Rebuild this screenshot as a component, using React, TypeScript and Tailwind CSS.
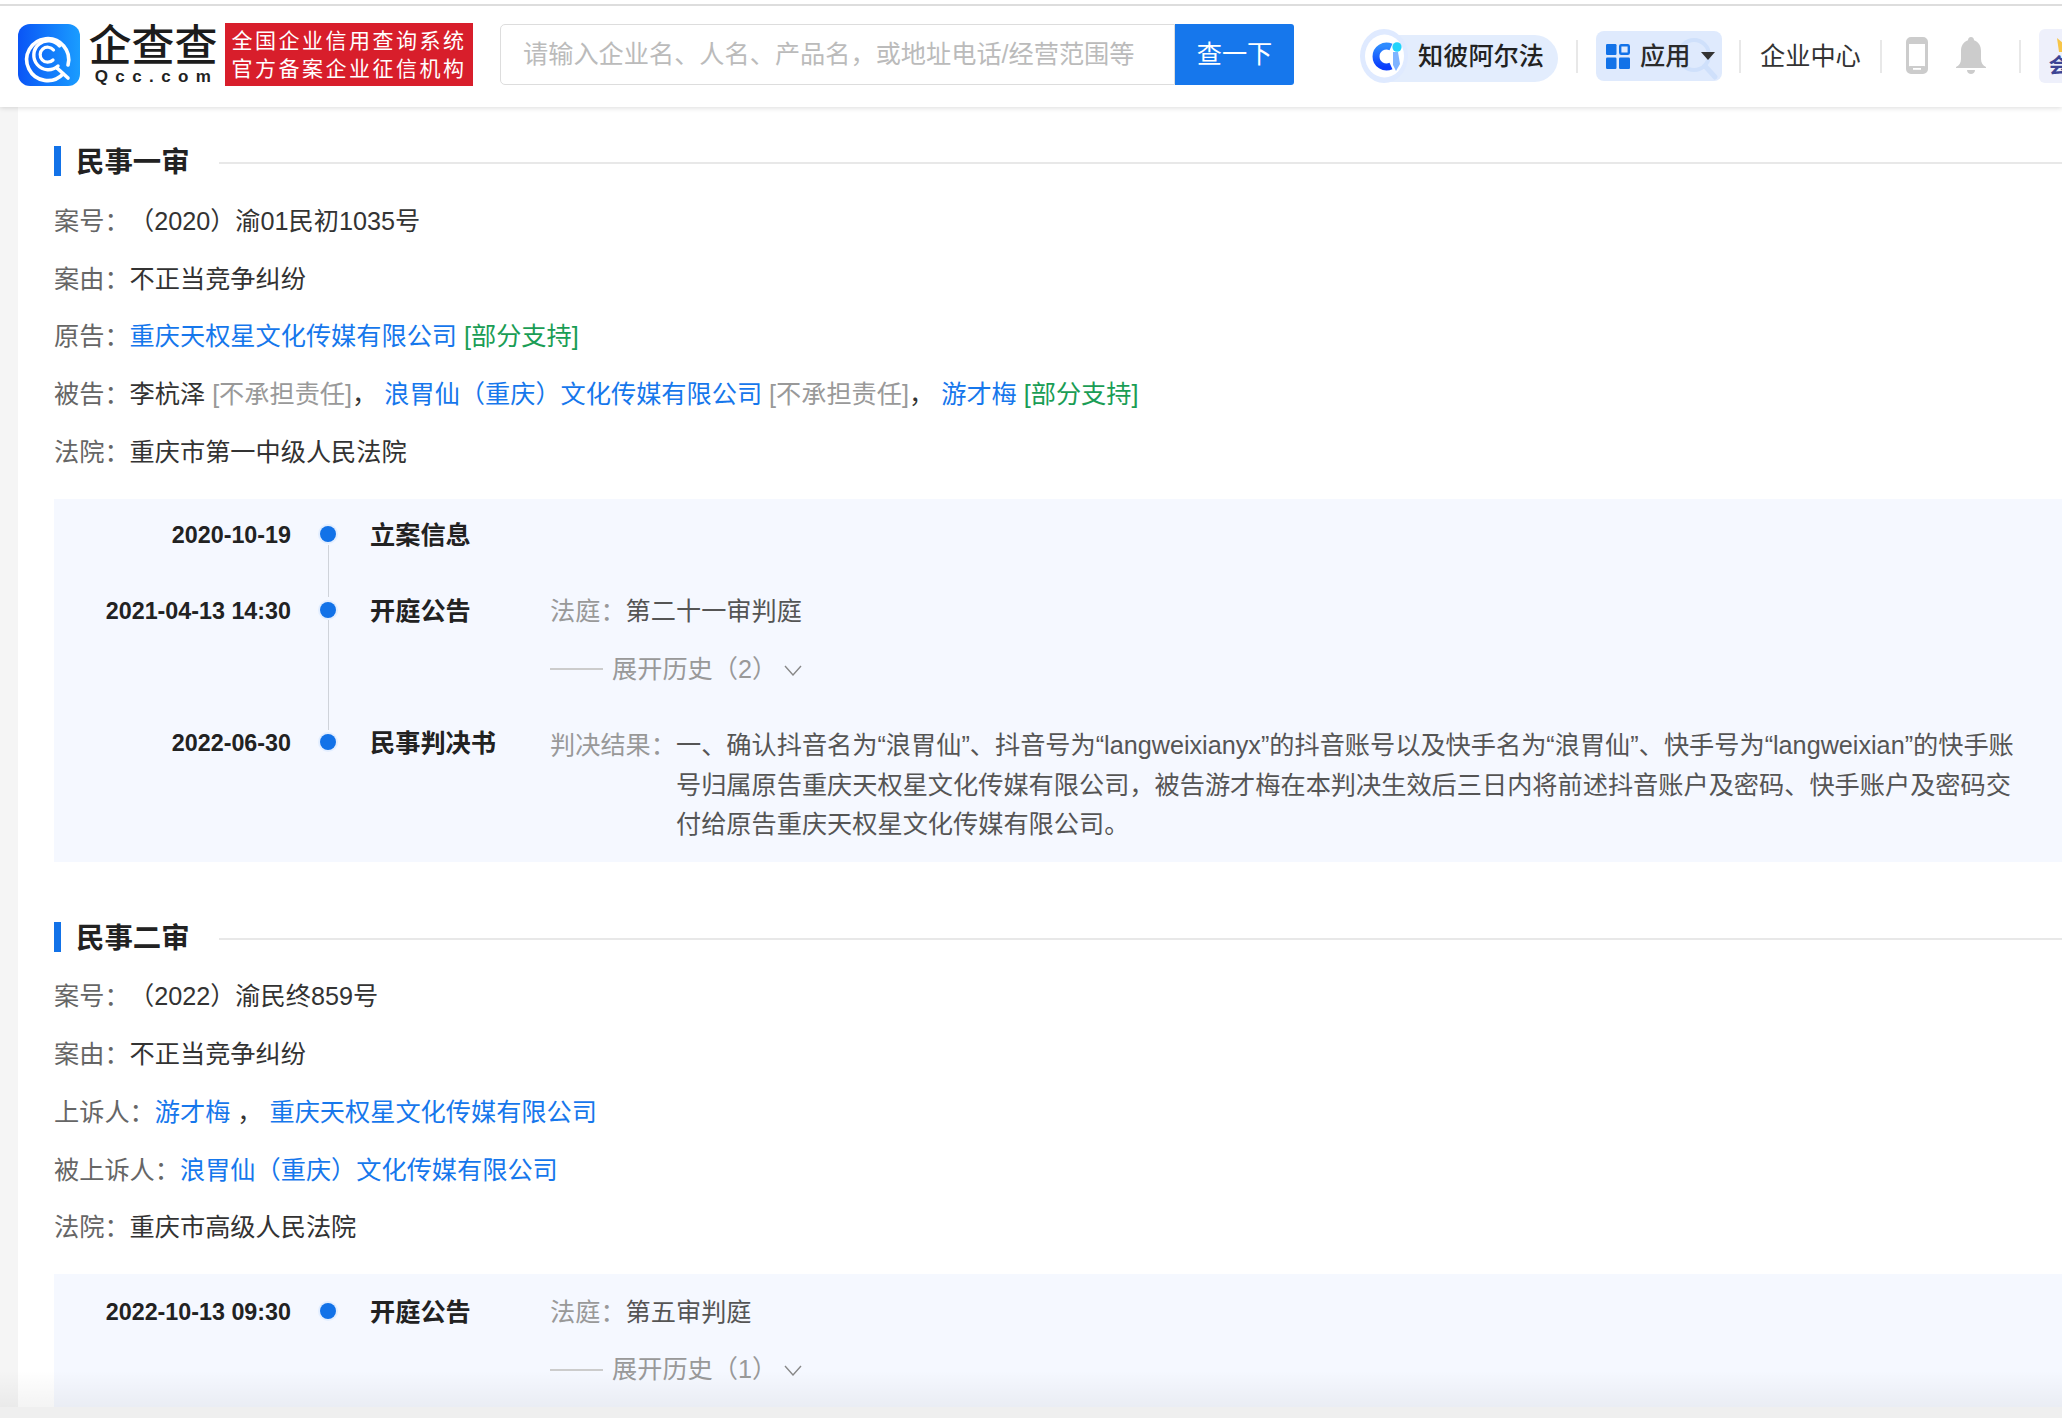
import type { ReactNode } from "react";

const FONT = { fontFamily: '"Liberation Sans", "Noto Sans CJK SC", sans-serif' };

function Link({ children }: { children: ReactNode }) {
  return <span className="text-[#1677ec]">{children}</span>;
}

function Grey({ children }: { children: ReactNode }) {
  return <span className="text-[#999999]">{children}</span>;
}

function Green({ children }: { children: ReactNode }) {
  return <span className="text-[#1a9d55]">{children}</span>;
}

function Divider({ className }: { className: string }) {
  return <div className={`h-[33px] w-[2px] shrink-0 bg-[#e8e8e8] ${className}`} />;
}

function QccLogo() {
  return (
    <svg width="62" height="62" viewBox="0 0 62 62" className="shrink-0">
      <defs>
        <linearGradient id="qcc" x1="0" y1="0" x2="1" y2="0">
          <stop offset="0" stopColor="#0a55f6" />
          <stop offset="1" stopColor="#1a9dff" />
        </linearGradient>
      </defs>
      <rect width="62" height="62" rx="12" fill="url(#qcc)" />
      <path d="M45 50 A21 21 0 1 1 50 41" fill="none" stroke="#fff" strokeWidth="3.6" strokeLinecap="round" />
      <path d="M40 42 A14.5 14.5 0 1 1 41.5 22" fill="none" stroke="#fff" strokeWidth="3.4" strokeLinecap="round" />
      <path d="M35 36 A7.5 7.5 0 1 1 35.5 26" fill="none" stroke="#fff" strokeWidth="3.2" strokeLinecap="round" />
      <path d="M39 44 L50 54" fill="none" stroke="#fff" strokeWidth="3.6" strokeLinecap="round" />
    </svg>
  );
}

function AlphaLogo() {
  return (
    <svg width="48" height="54" viewBox="0 0 48 54" className="relative z-10 shrink-0">
      <defs>
        <linearGradient id="alpha" x1="0" y1="0" x2="0" y2="1">
          <stop offset="0" stopColor="#2f8cff" />
          <stop offset="1" stopColor="#0a3dfc" />
        </linearGradient>
      </defs>
      <ellipse cx="24" cy="27" rx="24" ry="27" fill="#dfeaff" />
      <ellipse cx="24.5" cy="27" rx="19.5" ry="21.5" fill="#fff" />
      <path d="M31 18 A10.5 10.5 0 1 0 31 37" fill="none" stroke="url(#alpha)" strokeWidth="7" />
      <path d="M33 23 H38 L40 35 L36 42 L33 36 Z" fill="#7fb4ff" />
      <ellipse cx="37" cy="18" rx="4.6" ry="4.8" fill="#22d3fb" />
    </svg>
  );
}

function AppsIcon() {
  return (
    <svg width="24" height="25" viewBox="0 0 24 25" className="shrink-0">
      <rect width="10.5" height="11" rx="1.2" fill="#1272e8" />
      <rect x="14.2" y="1.2" width="8.6" height="8.6" rx="1" fill="none" stroke="#1272e8" strokeWidth="2.4" />
      <rect y="13.5" width="10.5" height="11.5" rx="1.2" fill="#1272e8" />
      <rect x="13" y="13.5" width="11" height="11.5" rx="1.2" fill="#1272e8" />
    </svg>
  );
}

function PhoneIcon() {
  return (
    <svg width="22" height="37" viewBox="0 0 22 37" className="shrink-0">
      <rect x="1.5" y="1.5" width="19" height="34" rx="3.5" fill="#fff" stroke="#cccccc" strokeWidth="3" />
      <rect x="2" y="2" width="18" height="5" fill="#cccccc" />
      <rect x="2" y="29" width="18" height="6" rx="2" fill="#cccccc" />
      <rect x="7" y="31" width="8" height="1.8" fill="#fff" />
    </svg>
  );
}

function BellIcon() {
  return (
    <svg width="30" height="37" viewBox="0 0 30 37" className="shrink-0">
      <path
        d="M15 0 C17 0 18 1.4 18 3.2 C23 5 25 9 25 14 V22 C25 26 27 28.5 30 30 V31 H0 V30 C3 28.5 5 26 5 22 V14 C5 9 7 5 12 3.2 C12 1.4 13 0 15 0 Z"
        fill="#cccccc"
      />
      <path d="M11 33 H19 C19 35.5 17 37 15 37 C13 37 11 35.5 11 33 Z" fill="#cccccc" />
    </svg>
  );
}

function Header() {
  return (
    <header className="relative z-10 shrink-0 bg-white shadow-[0_1px_5px_rgba(0,0,0,0.14)]">
      <div className="h-[4px] bg-white" />
      <div className="h-[2px] bg-[#dddddd]" />
      <div className="flex h-[101px] items-center pb-[4px] pl-[18px]">
        <QccLogo />
        <div className="ml-[8px] flex w-[130px] shrink-0 flex-col items-center">
          <div className="text-[43px] leading-[45px] font-medium whitespace-nowrap text-[#1c1c1c]">企查查</div>
          <div className="-mr-[7px] text-[17px] leading-[16px] font-bold tracking-[7.4px] whitespace-nowrap text-[#222222]">Qcc.com</div>
        </div>
        <div className="ml-[7px] flex h-[63px] w-[248px] shrink-0 flex-col items-center justify-center bg-[#d81e2b] text-[21px] leading-[27.5px] tracking-[2.5px] whitespace-nowrap text-white">
          <div>全国企业信用查询系统</div>
          <div>官方备案企业征信机构</div>
        </div>
        <div className="ml-[27px] flex h-[61px] w-[675px] shrink-0 items-center rounded-l-[5px] border border-[#dddddd] pl-[22px] text-[25.2px] whitespace-nowrap text-[#bbbbbb]">
          请输入企业名、人名、产品名，或地址电话/经营范围等
        </div>
        <div className="flex h-[61px] w-[119px] shrink-0 items-center justify-center rounded-r-[3px] bg-[#1677ec] text-[25.2px] text-white">
          查一下
        </div>
        <div className="flex items-center pt-[3px]">
          <div className="relative ml-[66px] flex w-[198px] shrink-0 items-center">
            <AlphaLogo />
            <div className="absolute top-[6px] left-[30px] h-[47px] w-[168px] rounded-r-[24px] bg-[#e3edfd]" />
            <span className="relative z-10 mt-[2px] ml-[10px] text-[25.2px] leading-none font-medium whitespace-nowrap text-[#222222]">知彼阿尔法</span>
          </div>
          <Divider className="ml-[18px]" />
          <div className="relative ml-[18px] flex h-[50px] w-[126px] shrink-0 items-center overflow-hidden rounded-[8px] bg-[#dfeafd] pl-[10px]">
            <svg width="50" height="50" viewBox="0 0 50 50" className="absolute top-[6px] left-[78px]">
              <circle cx="20" cy="18" r="15" fill="none" stroke="#cfe0fb" strokeWidth="4" />
              <path d="M31 29 L41 40" stroke="#cfe0fb" strokeWidth="5" strokeLinecap="round" />
            </svg>
            <AppsIcon />
            <span className="relative mt-[2px] ml-[10px] text-[25.2px] leading-none font-medium whitespace-nowrap text-[#2b2b2b]">应用</span>
            <span className="relative ml-[11px] h-0 w-0 border-x-[7px] border-t-[8px] border-x-transparent border-t-[#333333]" />
          </div>
          <Divider className="ml-[17px]" />
          <span className="mt-[2px] ml-[19px] shrink-0 text-[25.2px] whitespace-nowrap text-[#333333]">企业中心</span>
          <Divider className="ml-[19px]" />
          <div className="-mt-[2px] ml-[24px] flex items-center gap-[28px]">
            <PhoneIcon />
            <BellIcon />
          </div>
          <Divider className="ml-[33px]" />
          <div className="ml-[18px] flex h-[54px] w-[60px] shrink-0 flex-col items-center rounded-[6px] bg-[#eef0fb] pt-[7px]">
            <svg width="26" height="16" viewBox="0 0 26 16">
              <path d="M1 2 L7 7 L13 0 L19 7 L25 2 L23 16 H3 Z" fill="#f7c548" />
            </svg>
            <span className="text-[20px] leading-[28px] font-bold text-[#3d4494]">会员</span>
          </div>
        </div>
      </div>
    </header>
  );
}

function SectionTitle({ children, className }: { children: ReactNode; className: string }) {
  return (
    <div className={`flex h-[30px] items-center ${className}`}>
      <div className="h-full w-[7px] shrink-0 bg-[#1272e8]" />
      <h2 className="ml-[15px] shrink-0 pt-[2px] text-[28.4px] leading-none font-bold text-[#222222]">{children}</h2>
      <div className="mt-[3px] ml-[29px] h-[2px] flex-1 bg-[#e8e8e8]" />
    </div>
  );
}

function InfoRow({ label, children }: { label: string; children: ReactNode }) {
  return (
    <div className="h-[57.7px] text-[25.2px] leading-[57.7px] whitespace-pre text-[#333333]">
      <span className="text-[#666666]">{label}</span>
      {children}
    </div>
  );
}

type Step = {
  date: string;
  title: string;
  line?: string;
  body?: ReactNode;
  rowClass: string;
};

function Timeline({ steps, className }: { steps: Step[]; className: string }) {
  return (
    <div className={`bg-[#f5f8ff] ${className}`}>
      {steps.map((s) => (
        <div key={s.date} className={`relative flex ${s.rowClass}`}>
          <div className="w-[237px] shrink-0 text-right text-[23.3px] leading-[40px] font-bold text-[#222222]">{s.date}</div>
          <div className="w-[79px] shrink-0 pt-[11px] pl-[29px]">
            <div className="h-[16px] w-[16px] rounded-full bg-[#1272e8] shadow-[0_0_0_2px_#e3eeff]" />
          </div>
          {s.line && <div className={`absolute left-[274px] w-px bg-[#cfd3da] ${s.line}`} />}
          <div className="w-[180px] shrink-0 text-[25.2px] leading-[40px] font-bold text-[#222222]">{s.title}</div>
          <div className="min-w-0 flex-1 pr-[46px] text-[25.2px] leading-[39.5px] text-[#555555]">{s.body}</div>
        </div>
      ))}
    </div>
  );
}

function Expand({ count }: { count: number }) {
  return (
    <div className="mt-[18px] flex h-[40px] items-center text-[#999999]">
      <div className="h-[2px] w-[53px] bg-[#cccccc]" />
      <span className="ml-[9px]">展开历史（{count}）</span>
      <svg width="18" height="11" viewBox="0 0 18 11" className="mt-[2px] ml-[7px]">
        <path d="M1 1 L9 10 L17 1" fill="none" stroke="#888888" strokeWidth="1.4" />
      </svg>
    </div>
  );
}

function Court({ room }: { room: string }) {
  return (
    <div className="h-[40px] leading-[40px]">
      <Grey>法庭：</Grey>
      {room}
    </div>
  );
}

// faint diagonal stamp across the whole page, only the ones fully inside the window
function Watermark() {
  const marks: { x: number; y: number }[] = [];
  for (let i = -8; i < 16; i++) {
    for (let j = 0; j < 24; j++) {
      const x = i * 170 + j * 106;
      const y = 60 - i * 170 + j * 106;
      if (x > 0 && x < 1880 && y > 190 && y < 1400) marks.push({ x, y });
    }
  }
  return (
    <div className="pointer-events-none absolute inset-0 z-20 overflow-hidden">
      {marks.map((m) => (
        <span
          key={`${m.x}-${m.y}`}
          className="absolute origin-top-left rotate-[-45deg] text-[30px] font-bold tracking-[14px] whitespace-nowrap text-[rgba(0,0,0,0.014)]"
          style={{ left: m.x, top: m.y }}
        >
          88MP9G
        </span>
      ))}
    </div>
  );
}

export default function App() {
  const firstSteps: Step[] = [
    { date: "2020-10-19", title: "立案信息", line: "top-[30px] h-[52px]", rowClass: "h-[76px]" },
    {
      date: "2021-04-13 14:30",
      title: "开庭公告",
      line: "top-[29px] h-[110px]",
      rowClass: "h-[132px]",
      body: (
        <>
          <Court room="第二十一审判庭" />
          <Expand count={2} />
        </>
      ),
    },
    {
      date: "2022-06-30",
      title: "民事判决书",
      rowClass: "h-[139px]",
      body: (
        <div className="flex pt-[3px]">
          <span className="shrink-0 text-[#999999]">判决结果：</span>
          <p>
            一、确认抖音名为“浪胃仙”、抖音号为“langweixianyx”的抖音账号以及快手名为“浪胃仙”、快手号为“langweixian”的快手账号归属原告重庆天权星文化传媒有限公司，被告游才梅在本判决生效后三日内将前述抖音账户及密码、快手账户及密码交付给原告重庆天权星文化传媒有限公司。
          </p>
        </div>
      ),
    },
  ];

  const secondSteps: Step[] = [
    {
      date: "2022-10-13 09:30",
      title: "开庭公告",
      rowClass: "h-[115px]",
      body: (
        <>
          <Court room="第五审判庭" />
          <Expand count={1} />
        </>
      ),
    },
  ];

  return (
    <div className="relative flex h-[1418px] w-[2062px] flex-col overflow-hidden bg-[#f5f5f5]" style={FONT}>
      <Header />
      <main className="ml-[18px] flex-1 bg-white pl-[36px]">
        <SectionTitle className="mt-[39px]">民事一审</SectionTitle>
        <div className="mt-[17px]">
          <InfoRow label="案号：">
            <span className="ml-[12px]">（2020）渝01民初1035号</span>
          </InfoRow>
          <InfoRow label="案由：">不正当竞争纠纷</InfoRow>
          <InfoRow label="原告：">
            <Link>重庆天权星文化传媒有限公司</Link> <Green>[部分支持]</Green>
          </InfoRow>
          <InfoRow label="被告：">
            李杭泽 <Grey>[不承担责任]</Grey>， <Link>浪胃仙（重庆）文化传媒有限公司</Link> <Grey>[不承担责任]</Grey>，{" "}
            <Link>游才梅</Link> <Green>[部分支持]</Green>
          </InfoRow>
          <InfoRow label="法院：">重庆市第一中级人民法院</InfoRow>
        </div>
        <Timeline className="mt-[18px] pt-[16px]" steps={firstSteps} />

        <SectionTitle className="mt-[60px]">民事二审</SectionTitle>
        <div className="mt-[16px]">
          <InfoRow label="案号：">
            <span className="ml-[12px]">（2022）渝民终859号</span>
          </InfoRow>
          <InfoRow label="案由：">不正当竞争纠纷</InfoRow>
          <InfoRow label="上诉人：">
            <Link>游才梅</Link> ，<Link> 重庆天权星文化传媒有限公司</Link>
          </InfoRow>
          <InfoRow label="被上诉人：">
            <Link>浪胃仙（重庆）文化传媒有限公司</Link>
          </InfoRow>
          <InfoRow label="法院：">重庆市高级人民法院</InfoRow>
        </div>
        <Timeline className="mt-[17px] pt-[18px]" steps={secondSteps} />
      </main>
      <Watermark />
      <div className="pointer-events-none absolute right-0 bottom-0 left-0 z-30 h-[48px] bg-gradient-to-b from-transparent to-[rgba(0,0,0,0.06)]">
        <div className="absolute right-0 bottom-0 left-0 h-[11px] bg-[#efefef]" />
      </div>
    </div>
  );
}
